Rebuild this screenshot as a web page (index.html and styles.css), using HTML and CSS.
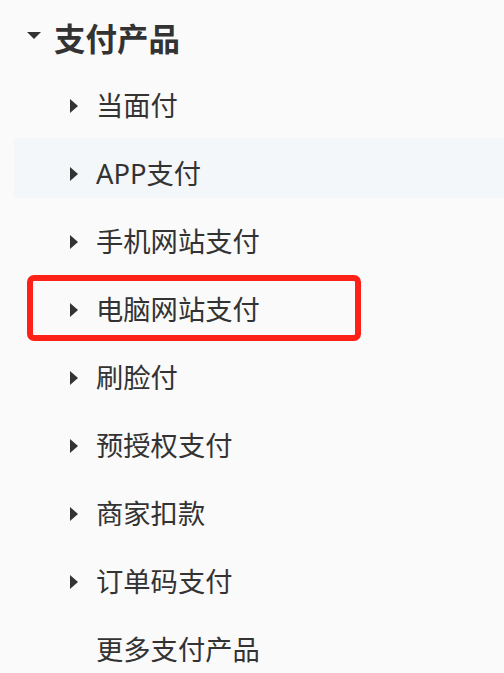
FILE: index.html
```html
<!DOCTYPE html>
<html lang="zh-CN">

<head>
    <meta charset="UTF-8">
    <meta name="viewport" content="width=device-width, initial-scale=1.0">
    <title>支付产品</title>
    <link rel="stylesheet" href="styles.css">
</head>

<body>

    <div class="menu">
        <div class="menu-title">
            <span class="arrow-down"></span>
            <span>支付产品</span>
        </div>
        <ul class="menu-list">
            <li class="menu-item"><span class="arrow-right"></span><span>当面付</span></li>
            <li class="menu-item hovered"><span class="arrow-right"></span><span>APP支付</span></li>
            <li class="menu-item"><span class="arrow-right"></span><span>手机网站支付</span></li>
            <li class="menu-item marked"><span class="arrow-right"></span><span>电脑网站支付</span></li>
            <li class="menu-item"><span class="arrow-right"></span><span>刷脸付</span></li>
            <li class="menu-item"><span class="arrow-right"></span><span>预授权支付</span></li>
            <li class="menu-item"><span class="arrow-right"></span><span>商家扣款</span></li>
            <li class="menu-item"><span class="arrow-right"></span><span>订单码支付</span></li>
            <li class="menu-item no-arrow"><span>更多支付产品</span></li>
        </ul>
    </div>

</body>

</html>
```

FILE: styles.css
```css
html,
body {
    box-sizing: border-box;
    margin: 0;
    padding: 0;
    width: 100%;
    height: 100%;
    background: #fafafa;
    font-family: "Noto Sans", "Noto Sans CJK SC", sans-serif;
    color: #333;
    overflow: hidden;
}

.menu-title{
    height: 70px;
    box-sizing: border-box;
    padding-top: 4px;
    padding-left: 27px;
    display: flex;
    align-items: center;
    font-size: 31.5px;
    font-weight: bold;
}
.arrow-down{
    width: 0;
    height: 0;
    border-left: 7px solid transparent;
    border-right: 7px solid transparent;
    border-top: 7px solid #333;
    margin-right: 13px;
    margin-top: -3px;
}

.menu-list{
    list-style: none;
    margin: 0;
    padding: 0;
}
.menu-item{
    position: relative;
    height: 60px;
    margin: 0 0 8px 14px;
    box-sizing: border-box;
    padding-top: 11px;
    padding-left: 56px;
    display: flex;
    align-items: center;
    font-size: 27.3px;
    line-height: 1;
}
.arrow-right{
    width: 0;
    height: 0;
    border-top: 7px solid transparent;
    border-bottom: 7px solid transparent;
    border-left: 8px solid #333;
    margin-right: 18px;
}
.menu-item.no-arrow{
    padding-left: 82px;
}
.menu-item.hovered{
    background: #f4f7fa;
}
.menu-item.marked:after{
    content: "";
    position: absolute;
    left: 13px;
    top: 1px;
    width: 334px;
    height: 66px;
    box-sizing: border-box;
    border: 6px solid #ff2017;
    border-radius: 7px;
}
```
